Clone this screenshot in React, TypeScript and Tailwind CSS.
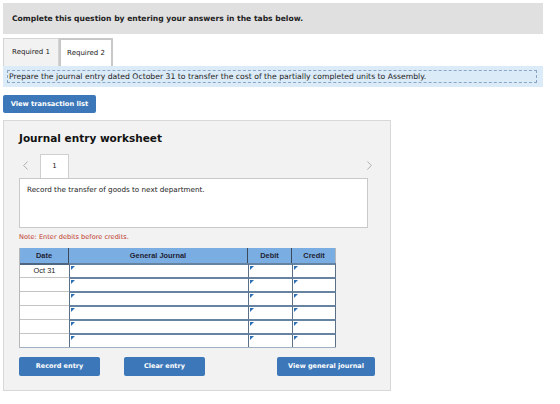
import React from "react";
import { ChevronLeft, ChevronRight } from "lucide-react";

const verdana = { fontFamily: '"DejaVu Sans", Verdana, sans-serif' };
const arial = { fontFamily: '"Liberation Sans", Arial, sans-serif' };

function InputCell({ className = "" }: { className?: string }) {
  return (
    <div className={`relative h-full bg-white border-l border-l-[#5b6f86] border-t-2 border-t-[#6683a2] ${className}`}>
      <span className="absolute left-[1px] top-[1px] w-0 h-0 border-t-[4px] border-t-[#2f6fb4] border-r-[4px] border-r-transparent" />
    </div>
  );
}

export default function App() {
  const rows = ["Oct 31", "", "", "", "", ""];

  return (
    <div className="w-[560px] h-[404px] bg-white p-[3px] text-[#222]" style={verdana}>
      {/* Question banner */}
      <div className="w-[540px] h-[31px] bg-[#e0e0e0] flex items-center pl-[9px]">
        <span className="text-[7.6px] font-bold">
          Complete this question by entering your answers in the tabs below.
        </span>
      </div>

      {/* Tabs */}
      <div className="flex mt-[4px] h-[28px]">
        <div className="w-[56px] h-full bg-[#f2f2f2] border border-[#d4d4d4] border-b-0 flex items-center justify-center text-[7px]">
          Required 1
        </div>
        <div className="w-[54px] h-full bg-white border-2 border-[#c8c8c8] border-b-0 flex items-center justify-center text-[7px]">
          Required 2
        </div>
      </div>

      {/* Instruction bar */}
      <div className="w-[540px] h-[21px] bg-[#dcebf8] py-[4px] pl-[4px]">
        <div className="h-[13px] w-[530px] border border-dashed border-[#8aa6c4] flex items-center pl-[1px] text-[7.7px]">
          Prepare the journal entry dated October 31 to transfer the cost of the partially completed units to Assembly.
        </div>
      </div>

      <button className="mt-[8px] w-[93px] h-[18px] bg-[#3c78b9] rounded-[2px] text-white font-bold text-[6.7px]">
        View transaction list
      </button>

      {/* Worksheet panel */}
      <div className="mt-[7px] w-[388px] h-[271px] bg-[#f2f2f2] border border-[#d8d8d8] pl-[15px] pt-[9px]">
        <div className="text-[10.5px] font-bold text-[#111] h-[16px] leading-[16px]">Journal entry worksheet</div>

        <div className="flex items-end h-[24px] mt-[8px] w-[356px]">
          <div className="w-[22px] h-full flex items-center pb-[2px] -ml-[1px]">
            <ChevronLeft size={15} strokeWidth={1.2} className="text-[#999]" />
          </div>
          <div className="w-[29px] h-[24px] bg-white border border-[#cfcfcf] border-b-0 flex items-center justify-center text-[7px]">
            1
          </div>
          <div className="ml-auto h-full flex items-center pb-[2px] -mr-[2px]">
            <ChevronRight size={15} strokeWidth={1.2} className="text-[#999]" />
          </div>
        </div>

        <div className="w-[349px] h-[50px] bg-white border border-[#c9c9c9] pl-[7px] pt-[6px] text-[7.2px]">
          Record the transfer of goods to next department.
        </div>

        <div className="mt-[5px] text-[6.6px] text-[#c0392b] h-[8px] leading-[8px]">Note: Enter debits before credits.</div>

        {/* Journal table */}
        <div className="mt-[7px] w-[317px] border-x border-[#b8b8b8]" style={arial}>
          <div className="grid grid-cols-[49px_179px_44px_44px] h-[15px] bg-[#7aaee2] text-[7.4px] font-bold text-[#223]">
            <div className="flex items-center justify-center border-r border-r-[#3d4a5a]">Date</div>
            <div className="flex items-center justify-center border-r border-r-[#3d4a5a]">General Journal</div>
            <div className="flex items-center justify-center border-r border-r-[#3d4a5a]">Debit</div>
            <div className="flex items-center justify-center">Credit</div>
          </div>
          {rows.map((d, i) => (
            <div key={i} className="grid grid-cols-[49px_179px_44px_44px] h-[14px] bg-white">
              <div className={`flex items-center justify-center text-[7.4px] text-[#222] border-t ${i === 0 ? "border-t-[#4f6680] border-t-2" : "border-t-[#c4c4c4]"}`}>{d}</div>
              <InputCell />
              <InputCell />
              <InputCell className="border-r border-r-[#5b6f86]" />
            </div>
          ))}
          <div className="h-[1px] bg-[#9fb0c2]" />
        </div>

        {/* Action buttons */}
        <div className="flex mt-[9px] h-[19px] text-white font-bold text-[6.5px]">
          <button className="w-[81px] h-full bg-[#3c78b9] rounded-[2px]">Record entry</button>
          <button className="ml-[24px] w-[81px] h-full bg-[#3c78b9] rounded-[2px]">Clear entry</button>
          <button className="ml-[72px] w-[98px] h-full bg-[#3c78b9] rounded-[2px]">View general journal</button>
        </div>
      </div>
    </div>
  );
}
